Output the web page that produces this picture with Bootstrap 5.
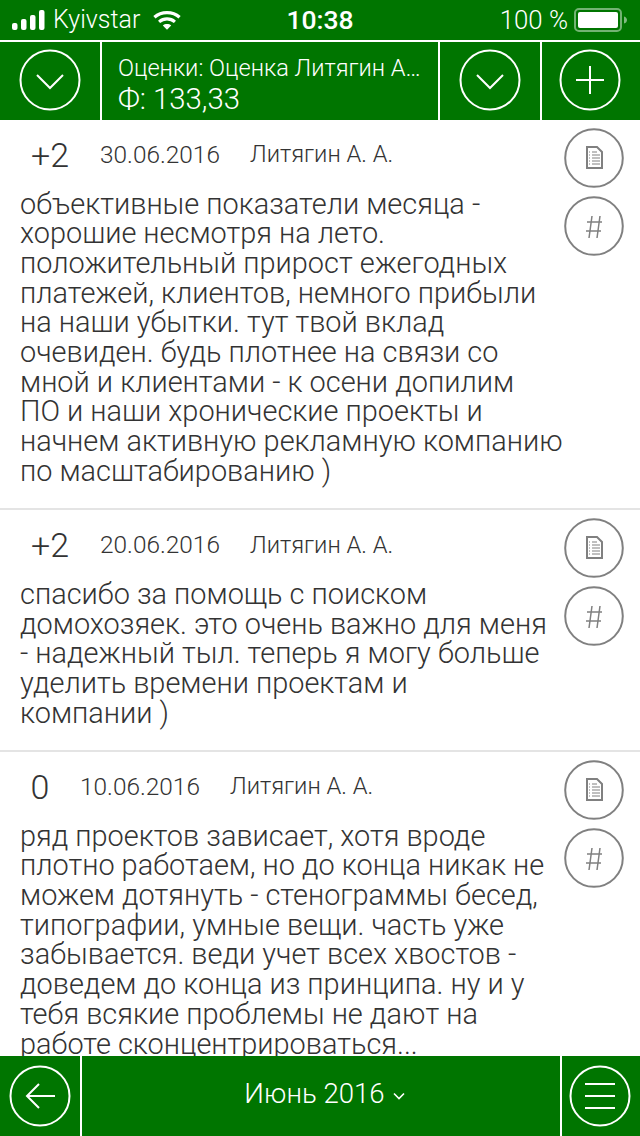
<!DOCTYPE html>
<html lang="ru">
<head>
  <meta charset="UTF-8" />
  <meta name="viewport" content="width=device-width, initial-scale=1" />
  <title>Оценки</title>
  <link href="https://cdn.jsdelivr.net/npm/bootstrap@5.3.0/dist/css/bootstrap.min.css" rel="stylesheet" />
  <style>
    body { font-family: Roboto, "Liberation Sans", sans-serif; font-weight: 300; background: #fff; color: #333; }
    .screen { width: 640px; height: 1136px; overflow: hidden; }
    .green-bar { background: #007500; color: #fff; }
    .status-bar { height: 40px; font-size: 25px; padding: 0 12px; position: relative; flex: none; }
    .status-carrier { margin-left: 8px; margin-right: 13px; width: 87px; }
    .status-time { position: absolute; left: 0; right: 0; text-align: center; font-weight: 500; font-size: 26.5px; }
    .status-level { margin-right: 6px; font-size: 25.8px; }
    .top-bar { height: 80px; border-top: 2px solid #fff; flex: none; }
    .bar-cell { flex: none; display: flex; align-items: center; justify-content: center; }
    .cell-first { width: 102px; border-right: 2px solid #fff; }
    .cell-title { width: 338px; border-right: 2px solid #fff; padding: 9px 16px 0; line-height: 1.2; }
    .cell-mid { width: 102px; border-right: 2px solid #fff; }
    .cell-last { width: 98px; padding-right: 3px; }
    .top-bar svg { margin-bottom: 3px; }
    .title-one { font-size: 23.6px; white-space: nowrap; }
    .title-two { font-size: 29.3px; margin-top: 0; }
    .list-area { flex: 1 1 0; overflow: hidden; }
    .mark-row { border-bottom: 2px solid #e4e4e4; padding-bottom: 21.8px; }
    .mark-main { width: 564px; flex: none; padding-left: 20px; }
    .mark-head { height: 70px; }
    .mark-value { font-size: 34px; width: 60px; text-align: center; }
    .mark-value-zero { width: 40px; }
    .mark-date { font-size: 24.4px; margin-left: 20px; width: 150px; }
    .mark-author { font-size: 23.7px; }
    .mark-text { font-size: 28.9px; line-height: 29.7px; margin: -0.5px 0 0; }
    .mark-side { flex: none; width: 60px; padding-top: 8px; }
    .side-btn { width: 60px; height: 60px; display: block; margin-bottom: 8px; }
    .bottom-bar { height: 80px; flex: none; }
    .cell-back { width: 82px; border-right: 2px solid #fff; }
    .cell-month { width: 480px; border-right: 2px solid #fff; font-size: 27.6px; padding: 0 0 5px 7px; }
    .cell-menu { width: 78px; padding-right: 3px; }
    .month-caret { margin: 5px 0 0 8px; }
  </style>
</head>
<body>
  <div class="screen d-flex flex-column">
    <div class="green-bar status-bar d-flex align-items-center">
      <svg width="33" height="20" viewBox="0 0 33 20"><g fill="#fff"><rect x="0" y="13" width="5.500" height="7" rx="2"/><rect x="9" y="9" width="5.500" height="11" rx="2"/><rect x="18" y="5" width="5.500" height="15" rx="2"/><rect x="27" y="0" width="5.500" height="20" rx="2"/></g></svg>
      <span class="status-carrier">Kyivstar</span>
      <svg width="28" height="21" viewBox="0 0 30 22"><g fill="none" stroke="#fff" stroke-width="3.400"><path d="M1.500 7.500C9 .8 21 .8 28.500 7.500"/><path d="M6.500 12.500C11.500 8.300 18.500 8.300 23.500 12.500"/></g><path d="M10.500 16.300C13 14.300 17 14.300 19.500 16.300L15 21z" fill="#fff"/></svg>
      <span class="status-time">10:38</span>
      <span class="ms-auto status-level">100 %</span>
      <svg width="54" height="24" viewBox="0 0 54 24"><rect x="1" y="1" width="46" height="22" rx="4" fill="none" stroke="#fff" stroke-opacity=".45" stroke-width="2"/><rect x="4" y="4" width="40" height="16" rx="2" fill="#fff"/><path d="M50 8.500c2 .5 3 2 3 3.500s-1 3-3 3.500z" fill="#fff" fill-opacity=".5"/></svg>
    </div>

    <div class="green-bar top-bar d-flex">
      <div class="bar-cell cell-first">
        <svg width="62" height="62" viewBox="0 0 62 62" fill="none" stroke="#fff" stroke-width="2"><circle cx="31" cy="31" r="29.500"/><path d="M18 26l13 13 13-13"/></svg>
      </div>
      <div class="bar-cell cell-title justify-content-start">
        <div class="overflow-hidden">
          <div class="title-one">Оценки: Оценка Литягин А…</div>
          <div class="title-two">Ф: 133,33</div>
        </div>
      </div>
      <div class="bar-cell cell-mid">
        <svg width="62" height="62" viewBox="0 0 62 62" fill="none" stroke="#fff" stroke-width="2"><circle cx="31" cy="31" r="29.500"/><path d="M18 26l13 13 13-13"/></svg>
      </div>
      <div class="bar-cell cell-last">
        <svg width="62" height="62" viewBox="0 0 62 62" fill="none" stroke="#fff" stroke-width="2"><circle cx="31" cy="31" r="29.500"/><path d="M31 17v28M17 31h28"/></svg>
      </div>
    </div>

    <div class="list-area" id="marks"></div>

    <div class="green-bar bottom-bar d-flex">
      <div class="bar-cell cell-back">
        <svg width="62" height="62" viewBox="0 0 62 62" fill="none" stroke="#fff" stroke-width="2"><circle cx="31" cy="31" r="29.500"/><path d="M46 31H18M30 19L18 31l12 12"/></svg>
      </div>
      <div class="bar-cell cell-month">Июнь 2016
        <svg class="month-caret" width="12" height="8" viewBox="0 0 12 8" fill="none" stroke="#fff" stroke-width="1.600"><path d="M1 1.500l5 5 5-5"/></svg>
      </div>
      <div class="bar-cell cell-menu">
        <svg width="62" height="62" viewBox="0 0 62 62" fill="none" stroke="#fff" stroke-width="2"><circle cx="31" cy="31" r="29.500"/><path d="M16 19h30M16 31h30M16 43h30"/></svg>
      </div>
    </div>
  </div>

  <script>
    const marks = [
      { value: "+2", date: "30.06.2016", author: "Литягин А. А.", text: "объективные показатели месяца -<br>хорошие несмотря на лето.<br>положительный прирост ежегодных<br>платежей, клиентов, немного прибыли<br>на наши убытки. тут твой вклад<br>очевиден. будь плотнее на связи со<br>мной и клиентами - к осени допилим<br>ПО и наши хронические проекты и<br>начнем активную рекламную компанию<br>по масштабированию )" },
      { value: "+2", date: "20.06.2016", author: "Литягин А. А.", text: "спасибо за помощь с поиском<br>домохозяек. это очень важно для меня<br>- надежный тыл. теперь я могу больше<br>уделить времени проектам и<br>компании )" },
      { value: "0", date: "10.06.2016", author: "Литягин А. А.", text: "ряд проектов зависает, хотя вроде<br>плотно работаем, но до конца никак не<br>можем дотянуть - стенограммы бесед,<br>типографии, умные вещи. часть уже<br>забывается. веди учет всех хвостов -<br>доведем до конца из принципа. ну и у<br>тебя всякие проблемы не дают на<br>работе сконцентрироваться..." }
    ];

    const docIcon = `<svg class="side-btn" viewBox="0 0 60 60" fill="none" stroke="#808080"><circle cx="30" cy="30" r="28.800" stroke-width="2"/><path d="M23 19h10l5 5v16H23z" stroke-width="2"/><path d="M25 24h1M28 24h5M25 27h1M28 27h8M25 30h1M28 30h8M25 33h1M28 33h8M25 36h1M28 36h8" stroke-width="1"/></svg>`;
    const hashIcon = `<svg class="side-btn" viewBox="0 0 60 60" fill="none" stroke="#808080" stroke-width="1.500"><circle cx="30" cy="30" r="28.800" stroke-width="2"/><path d="M28 20l-3 22M36 20l-3 22M23 26h15M22 35h15"/></svg>`;

    document.getElementById("marks").innerHTML = marks.map(m => `
      <div class="mark-row d-flex">
        <div class="mark-main">
          <div class="mark-head d-flex align-items-center">
            <span class="mark-value ${m.value === "0" ? "mark-value-zero" : ""}">${m.value}</span>
            <span class="mark-date">${m.date}</span>
            <span class="mark-author">${m.author}</span>
          </div>
          <p class="mark-text">${m.text}</p>
        </div>
        <div class="mark-side">${docIcon}${hashIcon}</div>
      </div>`).join("");
  </script>
  <script src="https://cdn.jsdelivr.net/npm/bootstrap@5.3.0/dist/js/bootstrap.bundle.min.js"></script>
</body>
</html>
